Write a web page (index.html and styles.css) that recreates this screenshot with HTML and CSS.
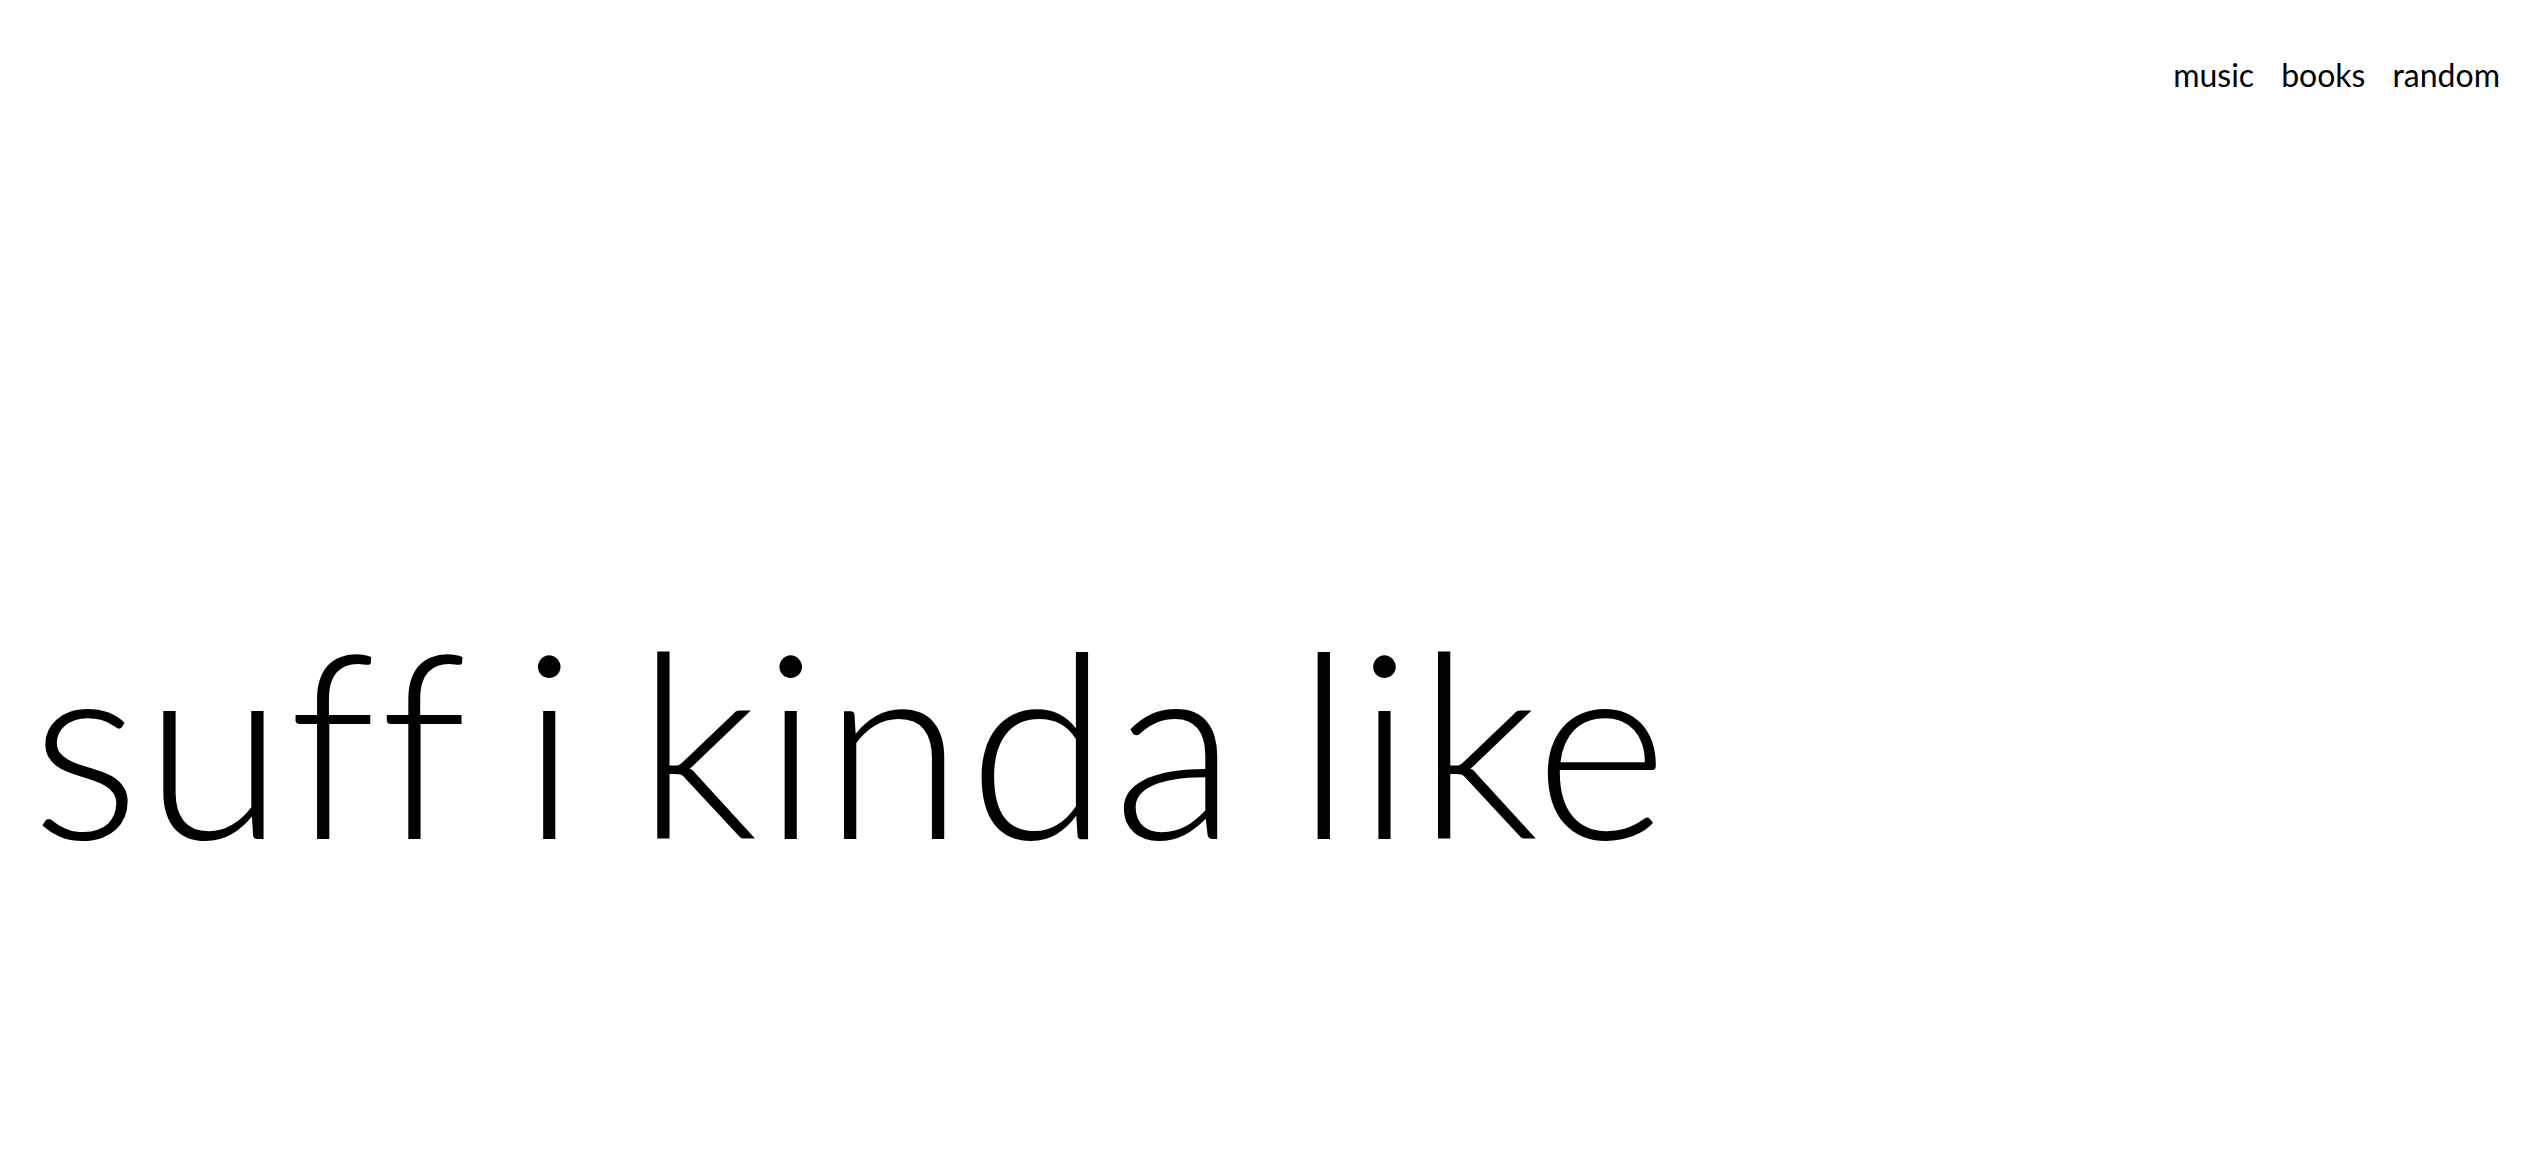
FILE: index.html
```html
<!DOCTYPE html>
<html lang="en">
<head>
<meta charset="utf-8">
<title>suff i kinda like</title>
<link rel="stylesheet" href="styles.css">
</head>
<body>
<header class="top">
  <nav class="nav">
    <a class="nav-link" href="#">music</a>
    <a class="nav-link" href="#">books</a>
    <a class="nav-link" href="#">random</a>
  </nav>
</header>
<main class="hero">
  <h1 class="title">suff i kinda like</h1>
</main>
</body>
</html>
```
FILE: styles.css
```css
html, body {
  margin: 0;
  padding: 0;
  background: #fff;
  color: #000;
  font-family: Lato, "Liberation Sans", sans-serif;
}
.top {
  display: flex;
  justify-content: flex-end;
  padding: 56px 42px 0 0;
}
.nav {
  display: flex;
  gap: 27px;
}
.nav-link {
  color: #000;
  text-decoration: none;
  font-size: 32px;
  line-height: 38px;
}
.hero {
  padding: 496px 0 0 31px;
}
.title {
  margin: 0;
  font-size: 256px;
  font-weight: 300;
  line-height: 300px;
  letter-spacing: 4px;
  word-spacing: -19px;
  font-variant-ligatures: none;
}
```
